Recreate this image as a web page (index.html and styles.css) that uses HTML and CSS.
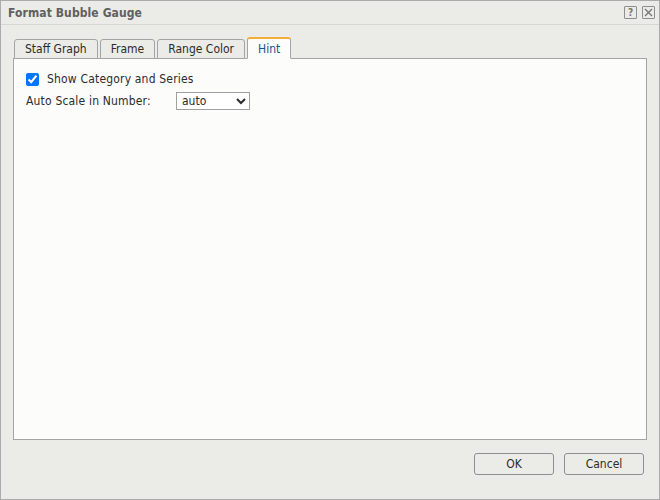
FILE: index.html
```html
<!DOCTYPE html>
<html>
<head>
<meta charset="utf-8">
<link rel="stylesheet" href="styles.css">
</head>
<body>
<div class="dialog">
  <div class="titlebar">
    <span class="title">Format Bubble Gauge</span>
    <div class="tools">
      <span class="tool">?</span>
      <span class="tool">
        <svg width="9" height="9" viewBox="0 0 9 9"><path d="M1 1 L8 8 M8 1 L1 8" stroke="#777" stroke-width="1.4" fill="none"/></svg>
      </span>
    </div>
  </div>
  <div class="body">
    <div class="tabs">
      <div class="tab">Staff Graph</div>
      <div class="tab">Frame</div>
      <div class="tab">Range Color</div>
      <div class="tab active">Hint</div>
    </div>
    <div class="panel">
      <label class="row check-row">
        <input type="checkbox" class="check" checked>
        <span>Show Category and Series</span>
      </label>
      <div class="row select-row">
        <span class="field-label">Auto Scale in Number:</span>
        <select class="select">
          <option>auto</option>
        </select>
      </div>
    </div>
  </div>
  <div class="footer">
    <button class="btn">OK</button>
    <button class="btn">Cancel</button>
  </div>
</div>
</body>
</html>
```
FILE: styles.css
```css
html, body {
  margin: 0;
  padding: 0;
}
body {
  width: 660px;
  height: 500px;
  font-family: "DejaVu Sans Condensed", "DejaVu Sans", sans-serif;
  font-size: 12px;
  color: #2b2b2b;
}
.dialog {
  box-sizing: border-box;
  width: 660px;
  height: 500px;
  border: 1px solid #ababab;
  background: #ebebe8;
  display: flex;
  flex-direction: column;
}
.titlebar {
  height: 23px;
  border-bottom: 1px solid #d6d6d3;
  display: flex;
  align-items: center;
  justify-content: space-between;
  padding: 0 4px 0 7px;
}
.title {
  font-weight: bold;
  font-size: 12px;
  letter-spacing: 0.1px;
  color: #606060;
}
.tools {
  display: flex;
  gap: 5px;
}
.tool {
  box-sizing: border-box;
  width: 13px;
  height: 13px;
  border: 1px solid #8e8e8e;
  border-radius: 1px;
  display: flex;
  align-items: center;
  justify-content: center;
  font-size: 10px;
  font-weight: bold;
  color: #777;
  line-height: 1;
}
.body {
  flex: 1;
  display: flex;
  flex-direction: column;
  padding: 12px 12px 0 12px;
}
.tabs {
  display: flex;
  align-items: flex-end;
  gap: 2px;
  padding-left: 1px;
  margin-bottom: -1px;
  position: relative;
  z-index: 1;
}
.tab {
  box-sizing: border-box;
  height: 20px;
  padding: 0 10px;
  border: 1px solid #a4a4a4;
  border-radius: 3px 3px 0 0;
  background: #ebebe8;
  display: flex;
  align-items: center;
  color: #2b2b2b;
}
.tab.active {
  height: 22px;
  background: #fcfdfa;
  border-top: 2px solid #f2ad3a;
  border-bottom: 1px solid #fcfdfa;
  color: #1f4f8f;
}
.panel {
  flex: 1;
  background: #fcfdfa;
  border: 1px solid #a4a4a4;
  padding: 12px 12px;
  display: flex;
  flex-direction: column;
  gap: 5px;
  letter-spacing: 0.18px;
}
.row {
  display: flex;
  align-items: center;
}
.check-row {
  height: 16px;
}
.check {
  margin: 0 8px 0 0;
  width: 13px;
  height: 13px;
}
.select-row {
  height: 18px;
}
.field-label {
  width: 150px;
}
.select {
  width: 74px;
  height: 18px;
  border: 1px solid #a0a0a0;
  border-radius: 0;
  background: #fff;
  font-family: inherit;
  font-size: 12px;
  color: #2b2b2b;
  padding: 0 0 0 1px;
  margin: 0;
}
.footer {
  display: flex;
  justify-content: flex-end;
  gap: 10px;
  padding: 13px 15px 24px 0;
}
.btn {
  box-sizing: border-box;
  width: 80px;
  height: 22px;
  border: 1px solid #8f8f8f;
  border-radius: 3px;
  background: #ebebe8;
  font-family: inherit;
  font-size: 12px;
  color: #2b2b2b;
  padding: 0;
  margin: 0;
}
```
